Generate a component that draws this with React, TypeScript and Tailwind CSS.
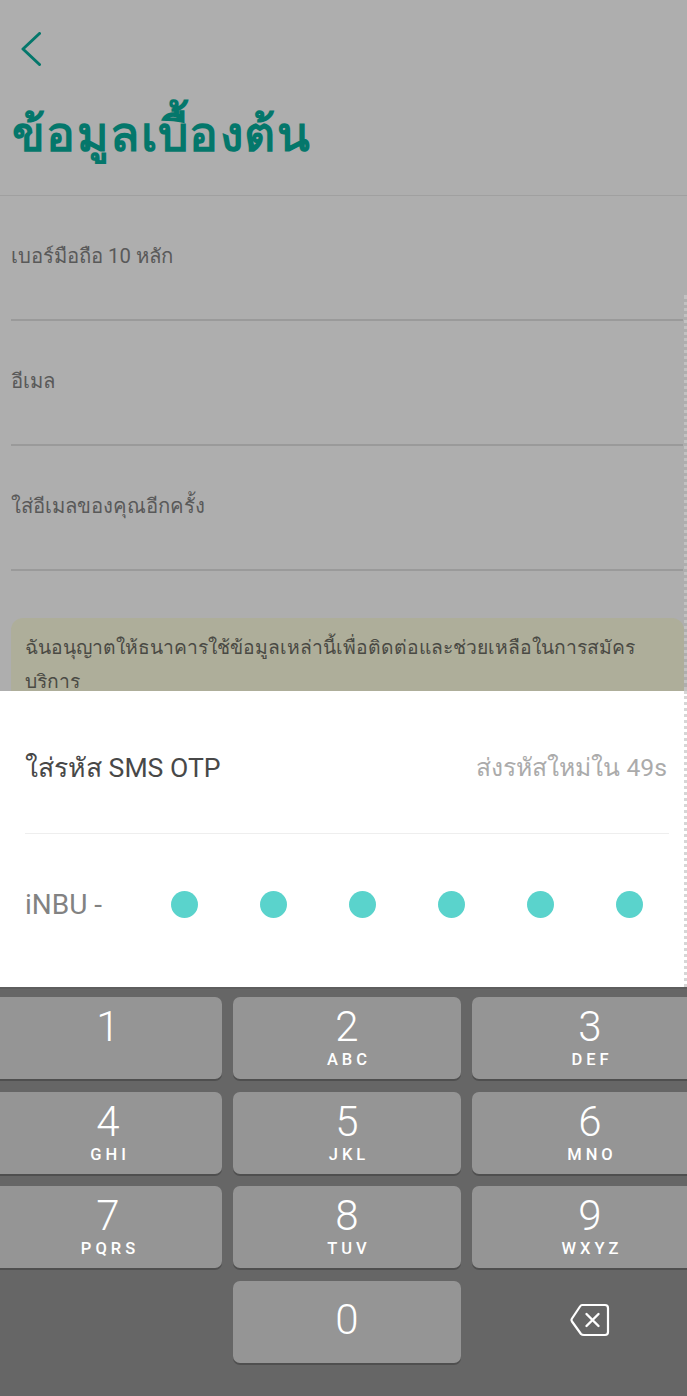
const keys = [
  { digit: '1', letters: '' },
  { digit: '2', letters: 'ABC' },
  { digit: '3', letters: 'DEF' },
  { digit: '4', letters: 'GHI' },
  { digit: '5', letters: 'JKL' },
  { digit: '6', letters: 'MNO' },
  { digit: '7', letters: 'PQRS' },
  { digit: '8', letters: 'TUV' },
  { digit: '9', letters: 'WXYZ' },
];

const fields = ['เบอร์มือถือ 10 หลัก', 'อีเมล', 'ใส่อีเมลของคุณอีกครั้ง'];

const Key = ({ digit, letters }: { digit: string; letters: string }) => (
  <div className="flex h-[82px] flex-col items-center rounded-[7px] bg-[#959595] shadow-[0_2px_0_#4f4f4f]">
    <span className="mt-[6px] text-[42px] leading-[48px] font-light text-white">{digit}</span>
    <span className="pl-[4px] text-[16.5px] leading-[18px] font-medium tracking-[4px] text-white">{letters}</span>
  </div>
);

export default function App() {
  return (
    <div className="relative flex h-[1396px] w-[687px] flex-col overflow-hidden bg-[#aeaeae] font-['Roboto','Noto_Sans','sans-serif']">
      <div className="h-[691px] overflow-hidden">
        <div className="pt-[32px] pl-[21px]">
          <svg width="20" height="34" viewBox="0 0 20 34" fill="none" className="block">
            <path d="M18.5 1.5 L2 17 L18.5 32.5" stroke="#04776b" strokeWidth="3" strokeLinecap="round" strokeLinejoin="round" />
          </svg>
        </div>
        <h1 className="mt-[34px] pl-[12px] text-[48px] leading-[70px] font-bold tracking-[1.4px] text-[#04776b]">ข้อมูลเบื้องต้น</h1>
        <div className="mt-[25px] h-px bg-[#a0a0a0]" />
        {fields.map((label) => (
          <div key={label} className="ml-[11px] mr-[4px] flex h-[125px] flex-col justify-end border-b-2 border-[#9a9a9a]">
            <span className="mb-[48px] text-[20.3px] leading-[30px] text-[#595959]">{label}</span>
          </div>
        ))}
        <div className="mt-[47px] ml-[11px] mr-[3px] h-[90px] rounded-[12px] bg-[#aeae9a] px-[14px] pt-[13px] text-[19.3px] leading-[34px] text-[#4a4a44]">
          ฉันอนุญาตให้ธนาคารใช้ข้อมูลเหล่านี้เพื่อติดต่อและช่วยเหลือในการสมัคร
          <br />
          บริการ
        </div>
      </div>
      {/* torn edge running down the right side */}
      <div className="absolute top-[295px] right-0 h-[396px] border-r-[3px] border-dotted border-[#c2c2c2]" />

      <div className="h-[296px] border-r-[3px] border-dotted border-[#d6d6d6] bg-white px-[25px] pr-[15px]">
        <div className="flex h-[142px] items-center justify-between pt-[12px] pr-[2px]">
          <span className="text-[26.6px] text-[#484848]">ใส่รหัส SMS OTP</span>
          <span className="text-[24.7px] text-[#ababab]">ส่งรหัสใหม่ใน 49s</span>
        </div>
        <div className="h-px bg-[#eeeeee]" />
        <div className="flex h-[141px] items-center">
          <span className="w-[146px] text-[28px] text-[#828282]">iNBU -</span>
          <div className="flex gap-[62px]">
            {[0, 1, 2, 3, 4, 5].map((i) => (
              <div key={i} className="size-[27px] rounded-full bg-[#5ad3cc]" />
            ))}
          </div>
        </div>
      </div>

      <div className="flex-1 border-t-2 border-[#5e5e5e] bg-[#666666] pt-[8px]">
        <div className="ml-[-6px] grid w-[714px] grid-cols-[228px_228px_236px] gap-x-[11px] gap-y-[12.6px]">
          {keys.map((k) => (
            <Key key={k.digit} digit={k.digit} letters={k.letters} />
          ))}
          <div />
          <div className="flex h-[82px] items-center justify-center rounded-[7px] bg-[#959595] pb-[4px] shadow-[0_2px_0_#4f4f4f]">
            <span className="text-[42px] leading-[48px] font-light text-white">0</span>
          </div>
          <div className="flex h-[82px] items-center justify-center pb-[4px]">
            <svg width="40" height="34" viewBox="0 0 40 34" fill="none">
              <path d="M12 2 H35 Q38 2 38 5 V29 Q38 32 35 32 H14 Q12 32 11 31 L2 18.5 Q1 17 2 15.5 L10 3.5 Q11 2 12 2 Z" stroke="#ffffff" strokeWidth="2.2" strokeLinejoin="round" />
              <path d="M16.5 11 L28.5 23 M28.5 11 L16.5 23" stroke="#ffffff" strokeWidth="2.4" strokeLinecap="round" />
            </svg>
          </div>
        </div>
      </div>
    </div>
  );
}
